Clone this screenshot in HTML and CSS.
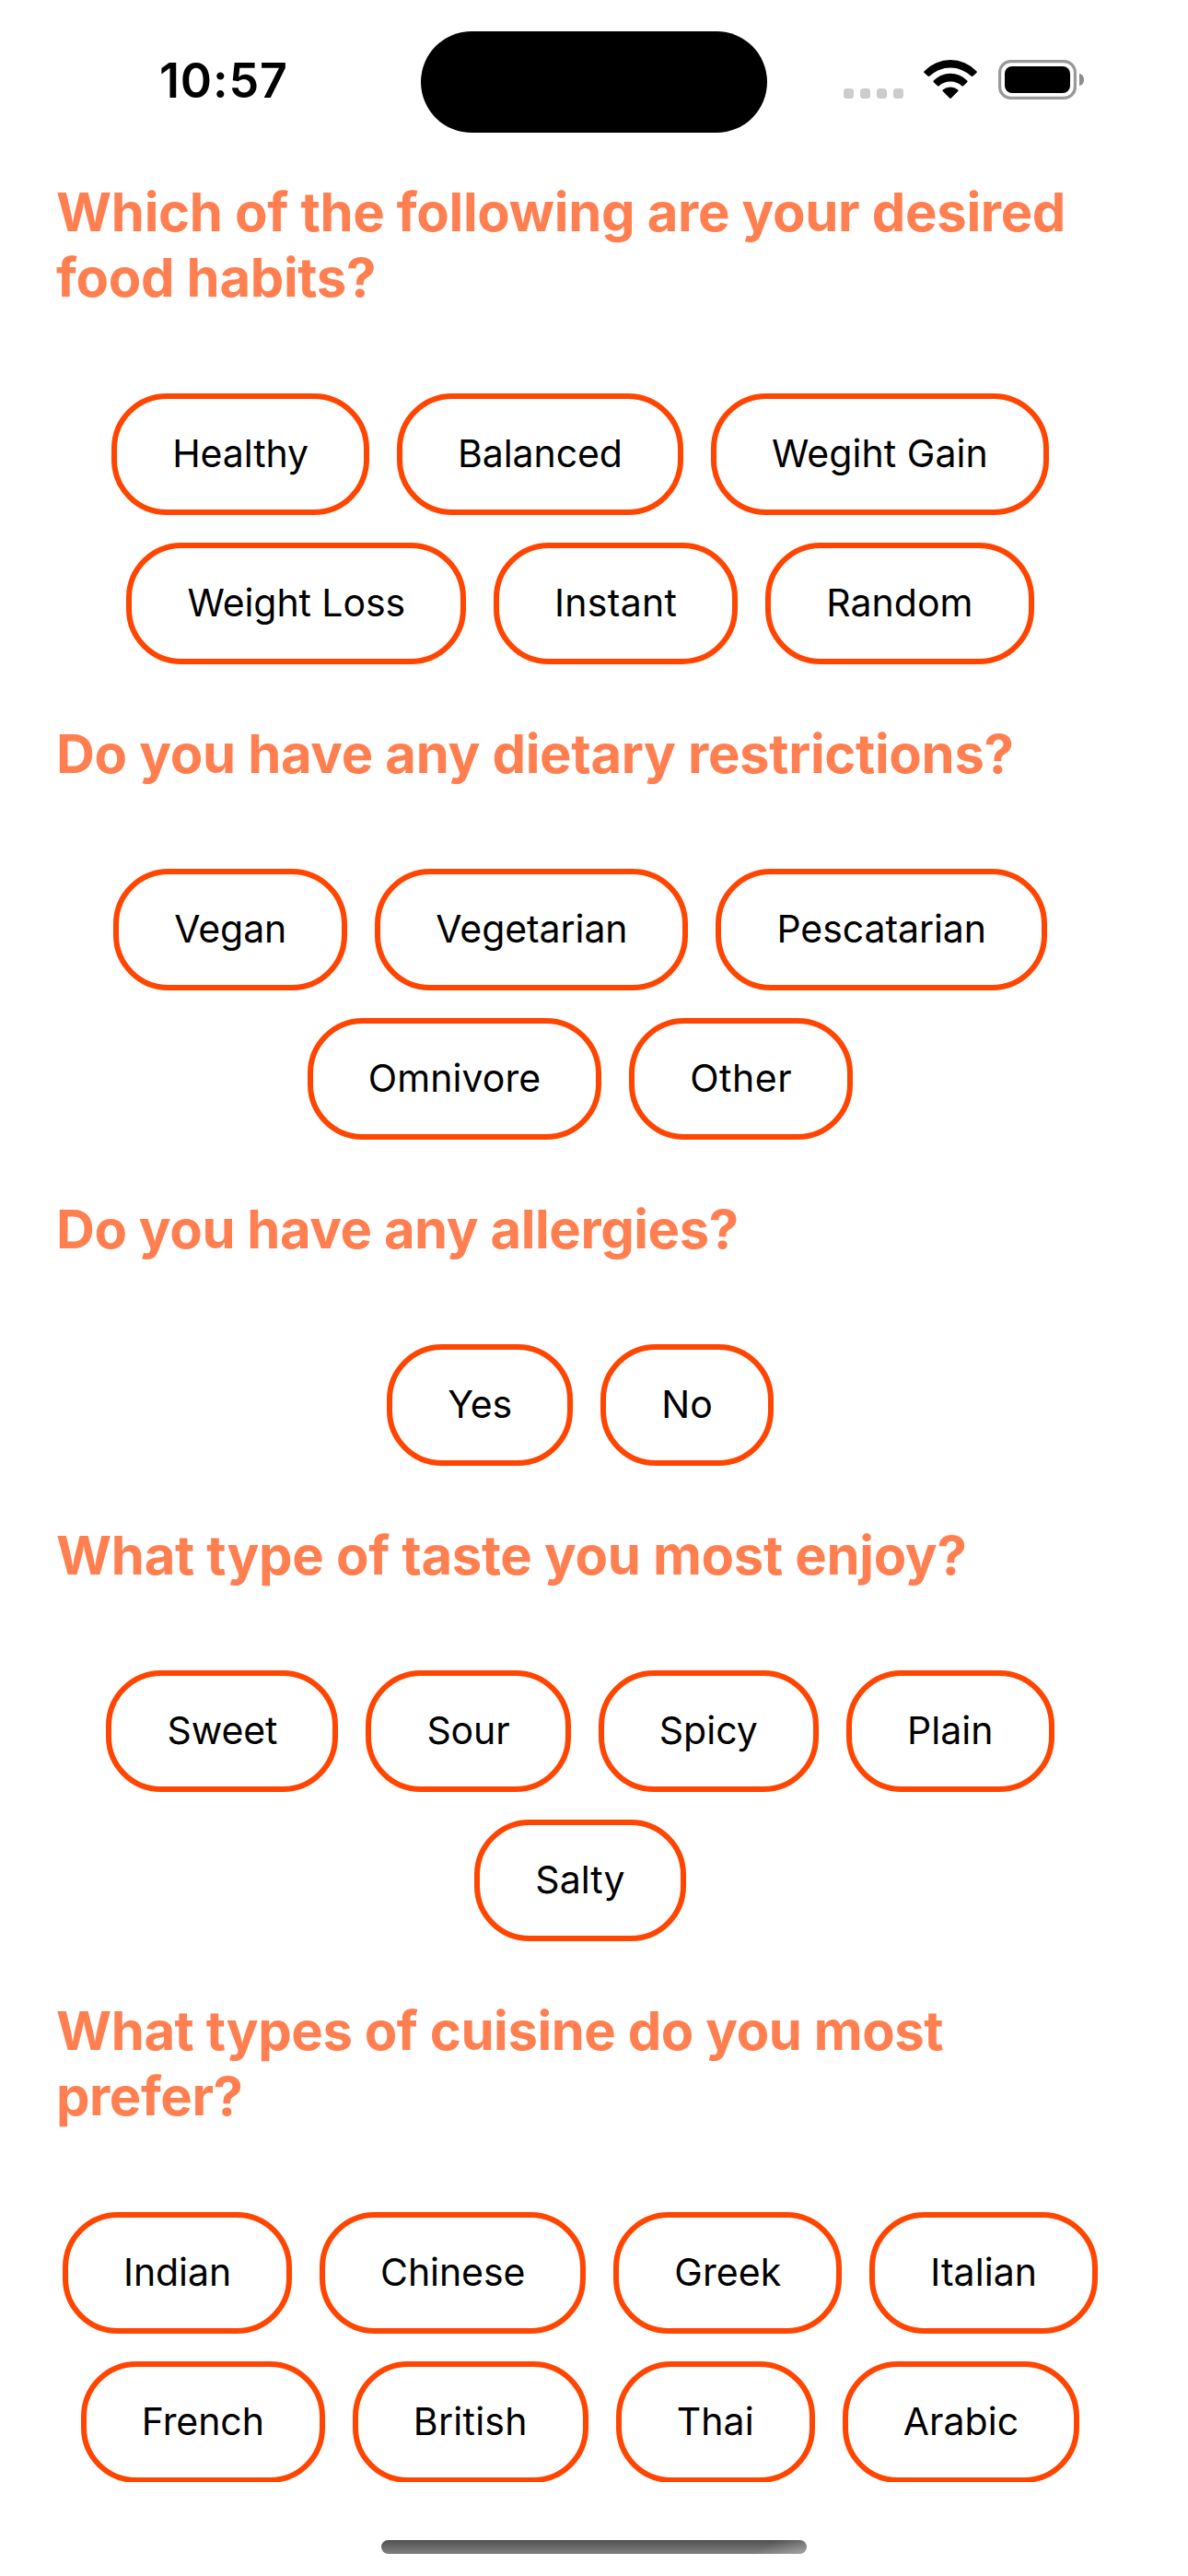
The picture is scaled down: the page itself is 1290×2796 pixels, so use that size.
FILE: index.html
```
<!DOCTYPE html>
<html lang="en">
<head>
  <meta charset="utf-8">
  <title>Food preferences</title>
  <link rel="stylesheet" href="styles.css">
</head>
<body>
  <div class="screen">
    <header class="status">
      <div class="status__time">10:57</div>
      <div class="status__island"></div>
      <div class="status__icons">
        <svg class="icon-signal" width="65" height="11" viewBox="0 0 65 11" fill="#ccc">
          <rect x="0" width="11" height="11" rx="3.5"/>
          <rect x="18" width="11" height="11" rx="3.5"/>
          <rect x="36" width="11" height="11" rx="3.5"/>
          <rect x="54" width="11" height="11" rx="3.5"/>
        </svg>
        <svg class="icon-wifi" width="58" height="43" viewBox="0 0 58 43">
          <path d="M.6 12.3A39.2 39.2 0 0 1 57.4 12.3Q58.3 13.2 57.4 14.1L53.2 17.7Q52.4 18.4 51.5 17.6A32.5 32.5 0 0 0 6.5 17.6Q5.6 18.4 4.8 17.7L.6 14.1Q-.3 13.2 .6 12.3Z"/>
          <path d="M10.8 22.6A25 25 0 0 1 47.2 22.6Q48 23.5 47.2 24.3L43 28.2Q42.2 28.9 41.3 28.2A18.6 18.6 0 0 0 16.7 28.2Q15.8 28.9 15 28.2L10.8 24.3Q10 23.5 10.8 22.6Z"/>
          <path d="M20.7 32.6A12.6 12.6 0 0 1 37.3 32.6Q38 33.3 37.3 34.1L29.8 41.6Q29 42.4 28.2 41.6L20.7 34.1Q20 33.3 20.7 32.6Z"/>
        </svg>
        <svg class="icon-battery" width="94" height="43" viewBox="0 0 94 43">
          <rect x="1.6" y="1.6" width="81.8" height="39.8" rx="12" fill="none" stroke="#999" stroke-width="3.2"/>
          <rect x="7" y="7" width="71" height="29" rx="8"/>
          <path d="M88 14.8Q93 16.5 93 21.5T88 28.2Z" fill="#8c8c8c"/>
        </svg>
      </div>
    </header>

    <main class="survey">
      <section class="question">
        <h2 class="question__title question__title--two-line">Which of the following are your desired food habits?</h2>
        <div class="chips">
          <button class="chip">Healthy</button>
          <button class="chip">Balanced</button>
          <button class="chip chip--even">Wegiht Gain</button>
          <button class="chip">Weight Loss</button>
          <button class="chip chip--loose">Instant</button>
          <button class="chip chip--even">Random</button>
        </div>
      </section>

      <section class="question">
        <h2 class="question__title">Do you have any dietary restrictions?</h2>
        <div class="chips">
          <button class="chip">Vegan</button>
          <button class="chip">Vegetarian</button>
          <button class="chip">Pescatarian</button>
          <button class="chip chip--even">Omnivore</button>
          <button class="chip chip--looser">Other</button>
        </div>
      </section>

      <section class="question">
        <h2 class="question__title question__title--tight">Do you have any allergies?</h2>
        <div class="chips">
          <button class="chip">Yes</button>
          <button class="chip chip--even">No</button>
        </div>
      </section>

      <section class="question">
        <h2 class="question__title">What type of taste you most enjoy?</h2>
        <div class="chips">
          <button class="chip">Sweet</button>
          <button class="chip">Sour</button>
          <button class="chip chip--even">Spicy</button>
          <button class="chip chip--even">Plain</button>
          <button class="chip chip--even">Salty</button>
        </div>
      </section>

      <section class="question">
        <h2 class="question__title question__title--two-line question__title--tight">What types of cuisine do you most prefer?</h2>
        <div class="chips">
          <button class="chip">Indian</button>
          <button class="chip">Chinese</button>
          <button class="chip chip--even">Greek</button>
          <button class="chip chip--even">Italian</button>
          <button class="chip">French</button>
          <button class="chip chip--loose">British</button>
          <button class="chip chip--even">Thai</button>
          <button class="chip chip--even">Arabic</button>
        </div>
      </section>
    </main>

    <footer class="home">
      <div class="home__indicator"></div>
    </footer>
  </div>
</body>
</html>
```
FILE: styles.css
```
* {
  box-sizing: border-box;
}

body {
  margin: 0;
  background: #fff;
  color: #000;
  font-family: Inter, "Liberation Sans", sans-serif;
}

.screen {
  display: flex;
  flex-direction: column;
  width: 1290px;
  height: 2796px;
  overflow: hidden;
}

/* Status bar */

.status {
  display: grid;
  grid-template-columns: 457px 376px 457px;
  flex: none;
  height: 177px;
  padding-top: 33px;
  align-items: start;
}

.status__time {
  padding: 23px 0 0 173px;
  font-size: 52px;
  font-weight: 600;
  line-height: 64px;
  letter-spacing: 0.85px;
}

.status__island {
  height: 110px;
  margin-top: 1px;
  border-radius: 55px;
  background: #000;
}

.status__icons {
  display: flex;
  align-items: flex-end;
  height: 75px;
  padding-left: 83px;
}

.icon-signal {
  margin: 0 22px 1px 0;
}

.icon-wifi {
  margin-right: 23px;
}

/* Questions */

.survey {
  display: flex;
  flex-direction: column;
  flex: none;
  gap: 60px;
  height: 2517px;
  padding-top: 16px;
  overflow: hidden;
}

.question__title {
  height: 72px;
  margin: 0 60px 90px 61px;
  padding-top: 1.5px;
  color: #ff7f50;
  font-size: 58px;
  font-weight: 700;
  line-height: 71px;
  letter-spacing: -0.33px;
}

.question__title--two-line {
  height: 144px;
}

.question__title--tight {
  letter-spacing: -0.45px;
}

.chips {
  display: flex;
  flex-wrap: wrap;
  justify-content: center;
  gap: 30px;
  padding: 0 60px 0 30px;
}

.chip {
  height: 132px;
  padding: 34px 60px 36px;
  border: 6px solid #ff4500;
  border-radius: 60px;
  background: none;
  color: #000;
  font: 400 41px/50px Inter, "Liberation Sans", sans-serif;
  letter-spacing: -0.08px;
  white-space: nowrap;
}

.chip--even {
  letter-spacing: 0.06px;
}

.chip--loose {
  letter-spacing: 0.27px;
}

.chip--looser {
  letter-spacing: 0.53px;
}

/* Home indicator */

.home {
  display: flex;
  justify-content: center;
  flex: none;
  height: 102px;
  padding-top: 63px;
}

.home__indicator {
  width: 462px;
  height: 15px;
  border-radius: 7.5px;
  background:
    linear-gradient(150deg, transparent 88%, rgba(255, 255, 255, 0.3)),
    linear-gradient(#505050, #808080);
}
```
